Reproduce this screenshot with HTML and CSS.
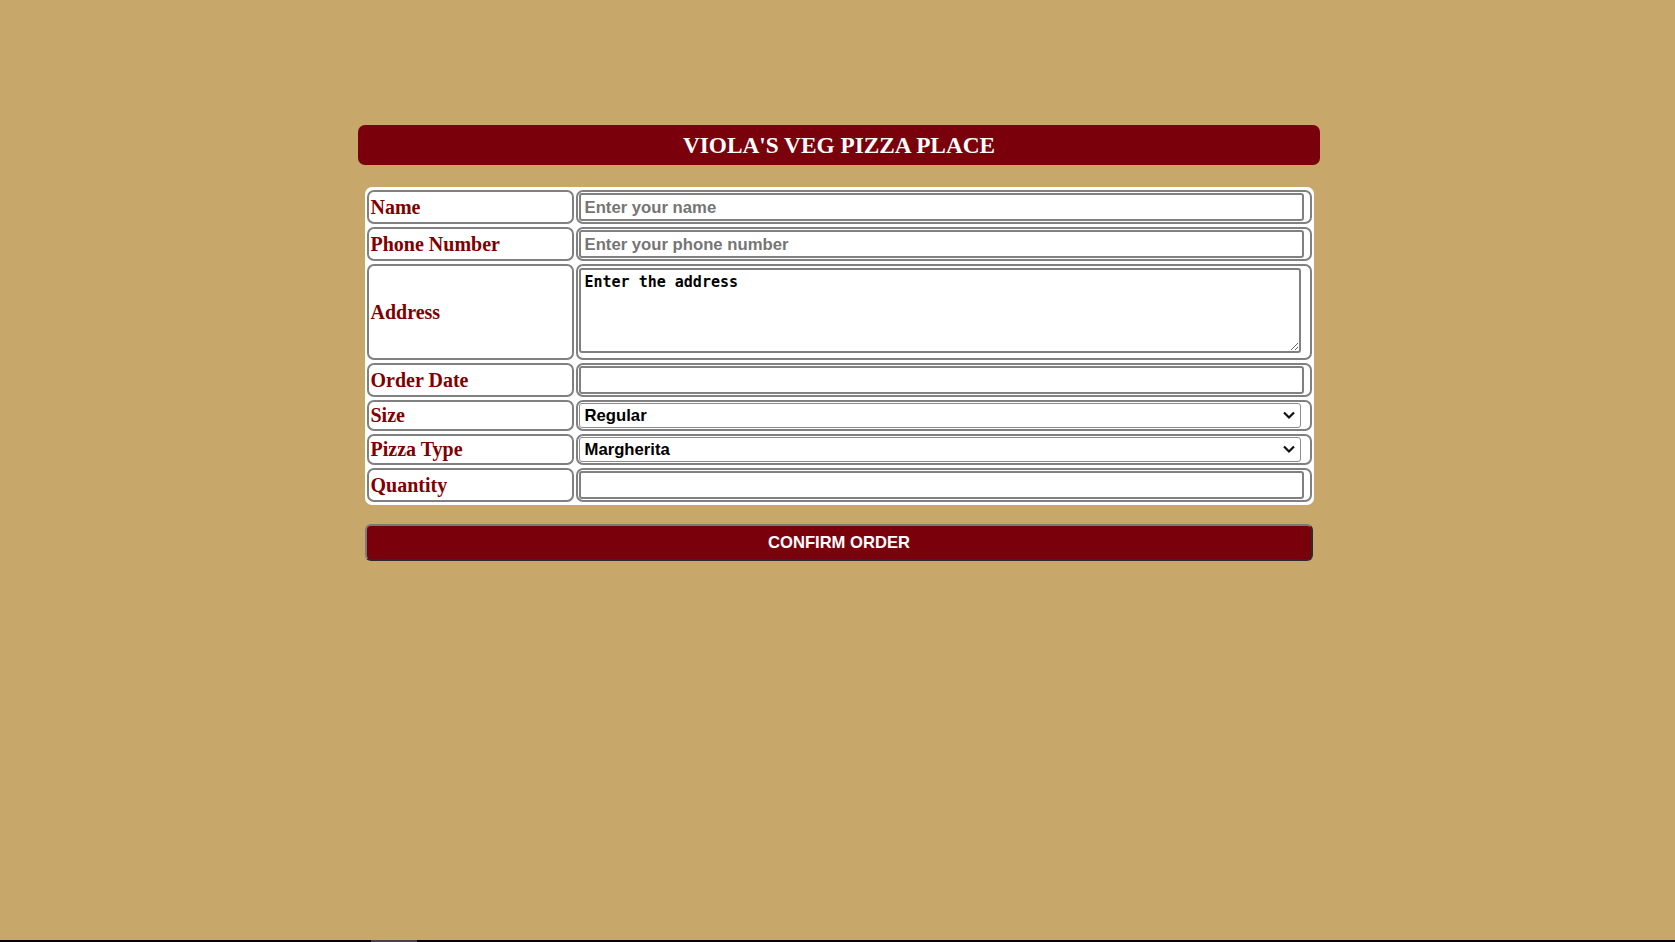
FILE: index.html
```html
<!DOCTYPE html>
<html lang="en">
<head>
<meta charset="utf-8">
<title>Viola's Veg Pizza Place</title>
<link rel="stylesheet" href="styles.css">
</head>
<body>
<main class="page">
  <h1 class="title">VIOLA'S VEG PIZZA PLACE</h1>
  <form class="order-form">
    <table class="form-table">
      <tr>
        <td class="label">Name</td>
        <td class="field"><input class="input" type="text" placeholder="Enter your name"></td>
      </tr>
      <tr>
        <td class="label">Phone Number</td>
        <td class="field"><input class="input" type="text" placeholder="Enter your phone number"></td>
      </tr>
      <tr>
        <td class="label">Address</td>
        <td class="field"><textarea class="textarea">Enter the address</textarea></td>
      </tr>
      <tr>
        <td class="label">Order Date</td>
        <td class="field"><input class="input" type="text"></td>
      </tr>
      <tr>
        <td class="label">Size</td>
        <td class="field">
          <div class="select-wrap">
            <select class="select"><option>Regular</option><option>Medium</option><option>Large</option></select>
            <svg class="chevron" width="14" height="10" viewBox="0 0 14 10"><path d="M2 2.5 L7 7.5 L12 2.5" fill="none" stroke="#111" stroke-width="2.2"/></svg>
          </div>
        </td>
      </tr>
      <tr>
        <td class="label">Pizza Type</td>
        <td class="field">
          <div class="select-wrap">
            <select class="select"><option>Margherita</option><option>Farmhouse</option><option>Veggie Supreme</option></select>
            <svg class="chevron" width="14" height="10" viewBox="0 0 14 10"><path d="M2 2.5 L7 7.5 L12 2.5" fill="none" stroke="#111" stroke-width="2.2"/></svg>
          </div>
        </td>
      </tr>
      <tr>
        <td class="label">Quantity</td>
        <td class="field"><input class="input" type="text"></td>
      </tr>
    </table>
    <button class="confirm" type="button">CONFIRM ORDER</button>
  </form>
</main>
<div class="scrollbar"><span class="thumb"></span></div>
</body>
</html>
```

FILE: styles.css
```css
html, body {
  margin: 0;
  padding: 0;
}

body {
  background: #c8a86a;
  min-height: 942px;
  font-family: "Liberation Serif", "Times New Roman", serif;
}

.page {
  display: flex;
  flex-direction: column;
  align-items: center;
  padding: 125px 0 0 3px;
}

.title {
  box-sizing: border-box;
  width: 962px;
  height: 40px;
  margin: 0;
  background: #7a000b;
  border-radius: 7px;
  color: #ffffff;
  font-family: "Liberation Serif", "Times New Roman", serif;
  font-size: 23.3px;
  font-weight: bold;
  line-height: 40px;
  text-align: center;
}

.order-form {
  display: flex;
  flex-direction: column;
  align-items: center;
  margin-top: 22px;
}

.form-table {
  width: 949px;
  background: #ffffff;
  border-radius: 7px;
  border-collapse: separate;
  border-spacing: 2px 3px;
}

.label {
  box-sizing: border-box;
  width: 207px;
  border: 2px solid #808080;
  border-radius: 7px;
  padding: 0 2px;
  color: #800000;
  font-size: 20px;
  font-weight: bold;
  vertical-align: middle;
}

.field {
  border: 2px solid #808080;
  border-radius: 7px;
  padding: 1px;
}

.input {
  display: block;
  box-sizing: border-box;
  width: calc(100% - 5px);
  height: 28px;
  margin: 0;
  border: 2px solid #808080;
  border-radius: 3px;
  padding: 1px 4px 0;
  background: #ffffff;
  font-family: "Liberation Sans", Arial, sans-serif;
  font-size: 16.7px;
  font-weight: bold;
  color: #000;
  outline: none;
}

.input::placeholder {
  color: #757575;
}

.textarea {
  display: block;
  box-sizing: border-box;
  width: calc(100% - 8px);
  height: 85px;
  margin: 1px 0 4px;
  border: 2px solid #808080;
  border-radius: 3px;
  padding: 3px 4px;
  font-family: "DejaVu Sans Mono", "Liberation Mono", monospace;
  font-size: 15px;
  font-weight: bold;
  color: #000;
  resize: both;
}

.select-wrap {
  position: relative;
}

.select {
  display: block;
  box-sizing: border-box;
  width: calc(100% - 8px);
  height: 25px;
  margin: 0;
  border: 1.5px solid #8a8a8a;
  border-radius: 3px;
  padding: 0 5px;
  background: #ffffff;
  appearance: none;
  -webkit-appearance: none;
  font-family: "Liberation Sans", Arial, sans-serif;
  font-size: 16.7px;
  font-weight: bold;
  color: #000;
}

.chevron {
  position: absolute;
  right: 13px;
  top: 7px;
  pointer-events: none;
}

.confirm {
  box-sizing: border-box;
  width: 948px;
  height: 37px;
  margin-top: 19px;
  border: 2px solid #7a7a7a;
  border-right-color: #2b2b2b;
  border-bottom-color: #2b2b2b;
  border-radius: 6px;
  background: #7a000b;
  color: #ffffff;
  font-family: "Liberation Sans", Arial, sans-serif;
  font-size: 16.6px;
  font-weight: bold;
  cursor: pointer;
}

.scrollbar {
  position: fixed;
  left: 0;
  right: 0;
  bottom: 0;
  height: 2px;
  background: #000;
}

.thumb {
  position: absolute;
  left: 371px;
  width: 46px;
  height: 2px;
  background: #444;
}
```
